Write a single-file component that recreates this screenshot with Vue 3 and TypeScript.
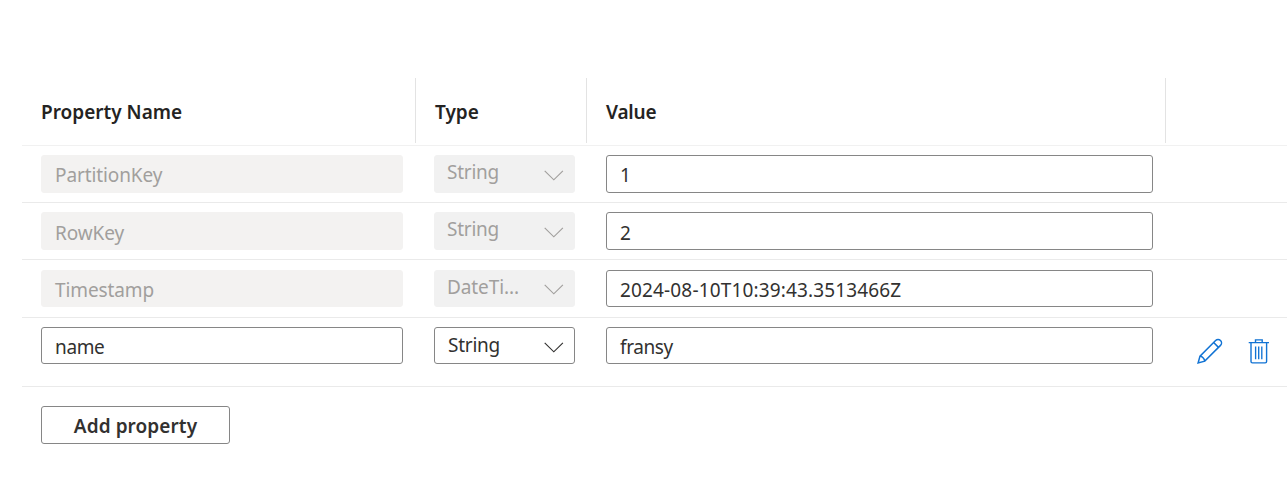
<script setup lang="ts">
interface Row {
  id: string
  name: string
  type: string
  value: string
  locked: boolean
}

const columns: { label: string; cls: string }[] = [
  { label: 'Property Name', cls: 'h-name' },
  { label: 'Type', cls: 'h-type' },
  { label: 'Value', cls: 'h-value' },
]

const rows: Row[] = [
  { id: 'partition', name: 'PartitionKey', type: 'String', value: '1', locked: true },
  { id: 'row', name: 'RowKey', type: 'String', value: '2', locked: true },
  { id: 'timestamp', name: 'Timestamp', type: 'DateTi...', value: '2024-08-10T10:39:43.3513466Z', locked: true },
  { id: 'custom', name: 'name', type: 'String', value: 'fransy', locked: false },
]
</script>

<template>
  <main class="page">
    <div class="grid header">
      <div v-for="c in columns" :key="c.label" class="heading" :class="c.cls">{{ c.label }}</div>
    </div>
    <div v-for="r in rows" :key="r.id" class="grid row" :class="'row-' + r.id">
      <div class="box name" :class="{ locked: r.locked }"><span>{{ r.name }}</span></div>
      <div class="box type" :class="{ locked: r.locked }">
        <span>{{ r.type }}</span>
        <svg class="chevron" width="20" height="11" viewBox="0 0 20 11">
          <path d="M0.7 0.8 L9.8 9.8 L18.9 0.8" fill="none" stroke="currentColor" stroke-width="1.15" />
        </svg>
      </div>
      <div class="box value"><span>{{ r.value }}</span></div>
      <div v-if="!r.locked" class="actions">
        <svg width="26" height="27" viewBox="0 0 26 27" fill="none" stroke="#1173d4" stroke-width="1.5">
          <path d="M1.1 25 L3 18.1 L18.6 2.5 A3.25 3.25 0 0 1 23.5 7.4 L7.8 23.1 Z" />
          <path d="M3 18.1 C5 18.3 7.5 20.8 7.8 23.1 M16.6 4.5 L21.5 9.4" />
        </svg>
        <svg width="22" height="27" viewBox="0 0 22 27" fill="none" stroke="#1173d4" stroke-width="1.4">
          <path d="M0.7 4.6 H21 M7.5 4.5 V1.9 H14.2 V4.5 M3 4.7 V23.5 Q3 24.9 4.4 24.9 H17.2 Q18.6 24.9 18.6 23.5 V4.7" />
          <path d="M7.6 8.5 V21.2 M10.7 8.5 V21.2 M13.8 8.5 V21.2" stroke-width="1.35" />
        </svg>
      </div>
    </div>
    <button class="add" type="button">Add property</button>
  </main>
</template>

<style>
body {
  margin: 0;
  background: #fff;
}
</style>

<style scoped>
.page {
  box-sizing: border-box;
  height: 504px;
  padding: 78px 0 0 22px;
  overflow: hidden;
  background: #fff;
  color: #323130;
  font-family: "Noto Sans", "Open Sans", sans-serif;
  font-size: 19px;
}
.grid {
  display: grid;
  box-sizing: border-box;
  border-bottom: 1px solid #eaeaea;
}
.header {
  grid-template-columns: 394px 171px 579px;
  height: 68px;
  border-bottom-color: #f1f1f1;
}
.heading {
  box-sizing: border-box;
  height: 65px;
  padding: 0 0 0 19px;
  border-right: 1px solid #e3e3e3;
  color: #242322;
  font-weight: 600;
  line-height: 69px;
}
.h-value {
  letter-spacing: -0.2px;
}
.row {
  grid-template-columns: 362px 141px 547px auto;
  column-gap: 31px;
  align-items: start;
  height: 57px;
  padding: 9px 0 0 19px;
}
.row-timestamp {
  height: 58px;
  padding-top: 10px;
}
.row-custom {
  height: 69px;
}
.box {
  display: flex;
  box-sizing: border-box;
  height: 38px;
  padding: 0 0 0 13px;
  border: 1px solid #868686;
  border-radius: 3px;
  line-height: 38px;
  letter-spacing: -0.1px;
  white-space: nowrap;
}
.row-timestamp .box,
.row-custom .box {
  height: 37px;
}
.row-timestamp .value {
  letter-spacing: 0.15px;
}
.row-custom .value {
  letter-spacing: -0.4px;
}
.row-custom .name {
  letter-spacing: -0.35px;
}
.row-row .name,
.row-row .value {
  line-height: 40px;
}
.box.locked {
  border-color: #f3f2f1;
  background: #f3f2f1;
  color: #a19f9d;
}
.type.locked {
  border-color: #f1f1f1;
  background: #f1f1f1;
}
.box.type {
  justify-content: space-between;
  padding: 0 10px 0 12px;
  line-height: 32px;
  letter-spacing: -0.25px;
}
.row-timestamp .type {
  letter-spacing: -0.1px;
}
.row-custom .type {
  padding-left: 13px;
  line-height: 34px;
}
.chevron {
  flex: none;
  margin-top: 14px;
}
.row-timestamp .chevron {
  margin-top: 13px;
}
.actions {
  display: flex;
  gap: 25px;
  margin: 11px 0 0 13px;
}
.add {
  display: block;
  box-sizing: border-box;
  width: 189px;
  height: 38px;
  margin: 19px 0 0 19px;
  padding: 0;
  border: 1px solid #868686;
  border-radius: 3px;
  background: #fff;
  color: #323130;
  font: 600 19px/38px "Noto Sans", "Open Sans", sans-serif;
  letter-spacing: 0.08px;
}
</style>
